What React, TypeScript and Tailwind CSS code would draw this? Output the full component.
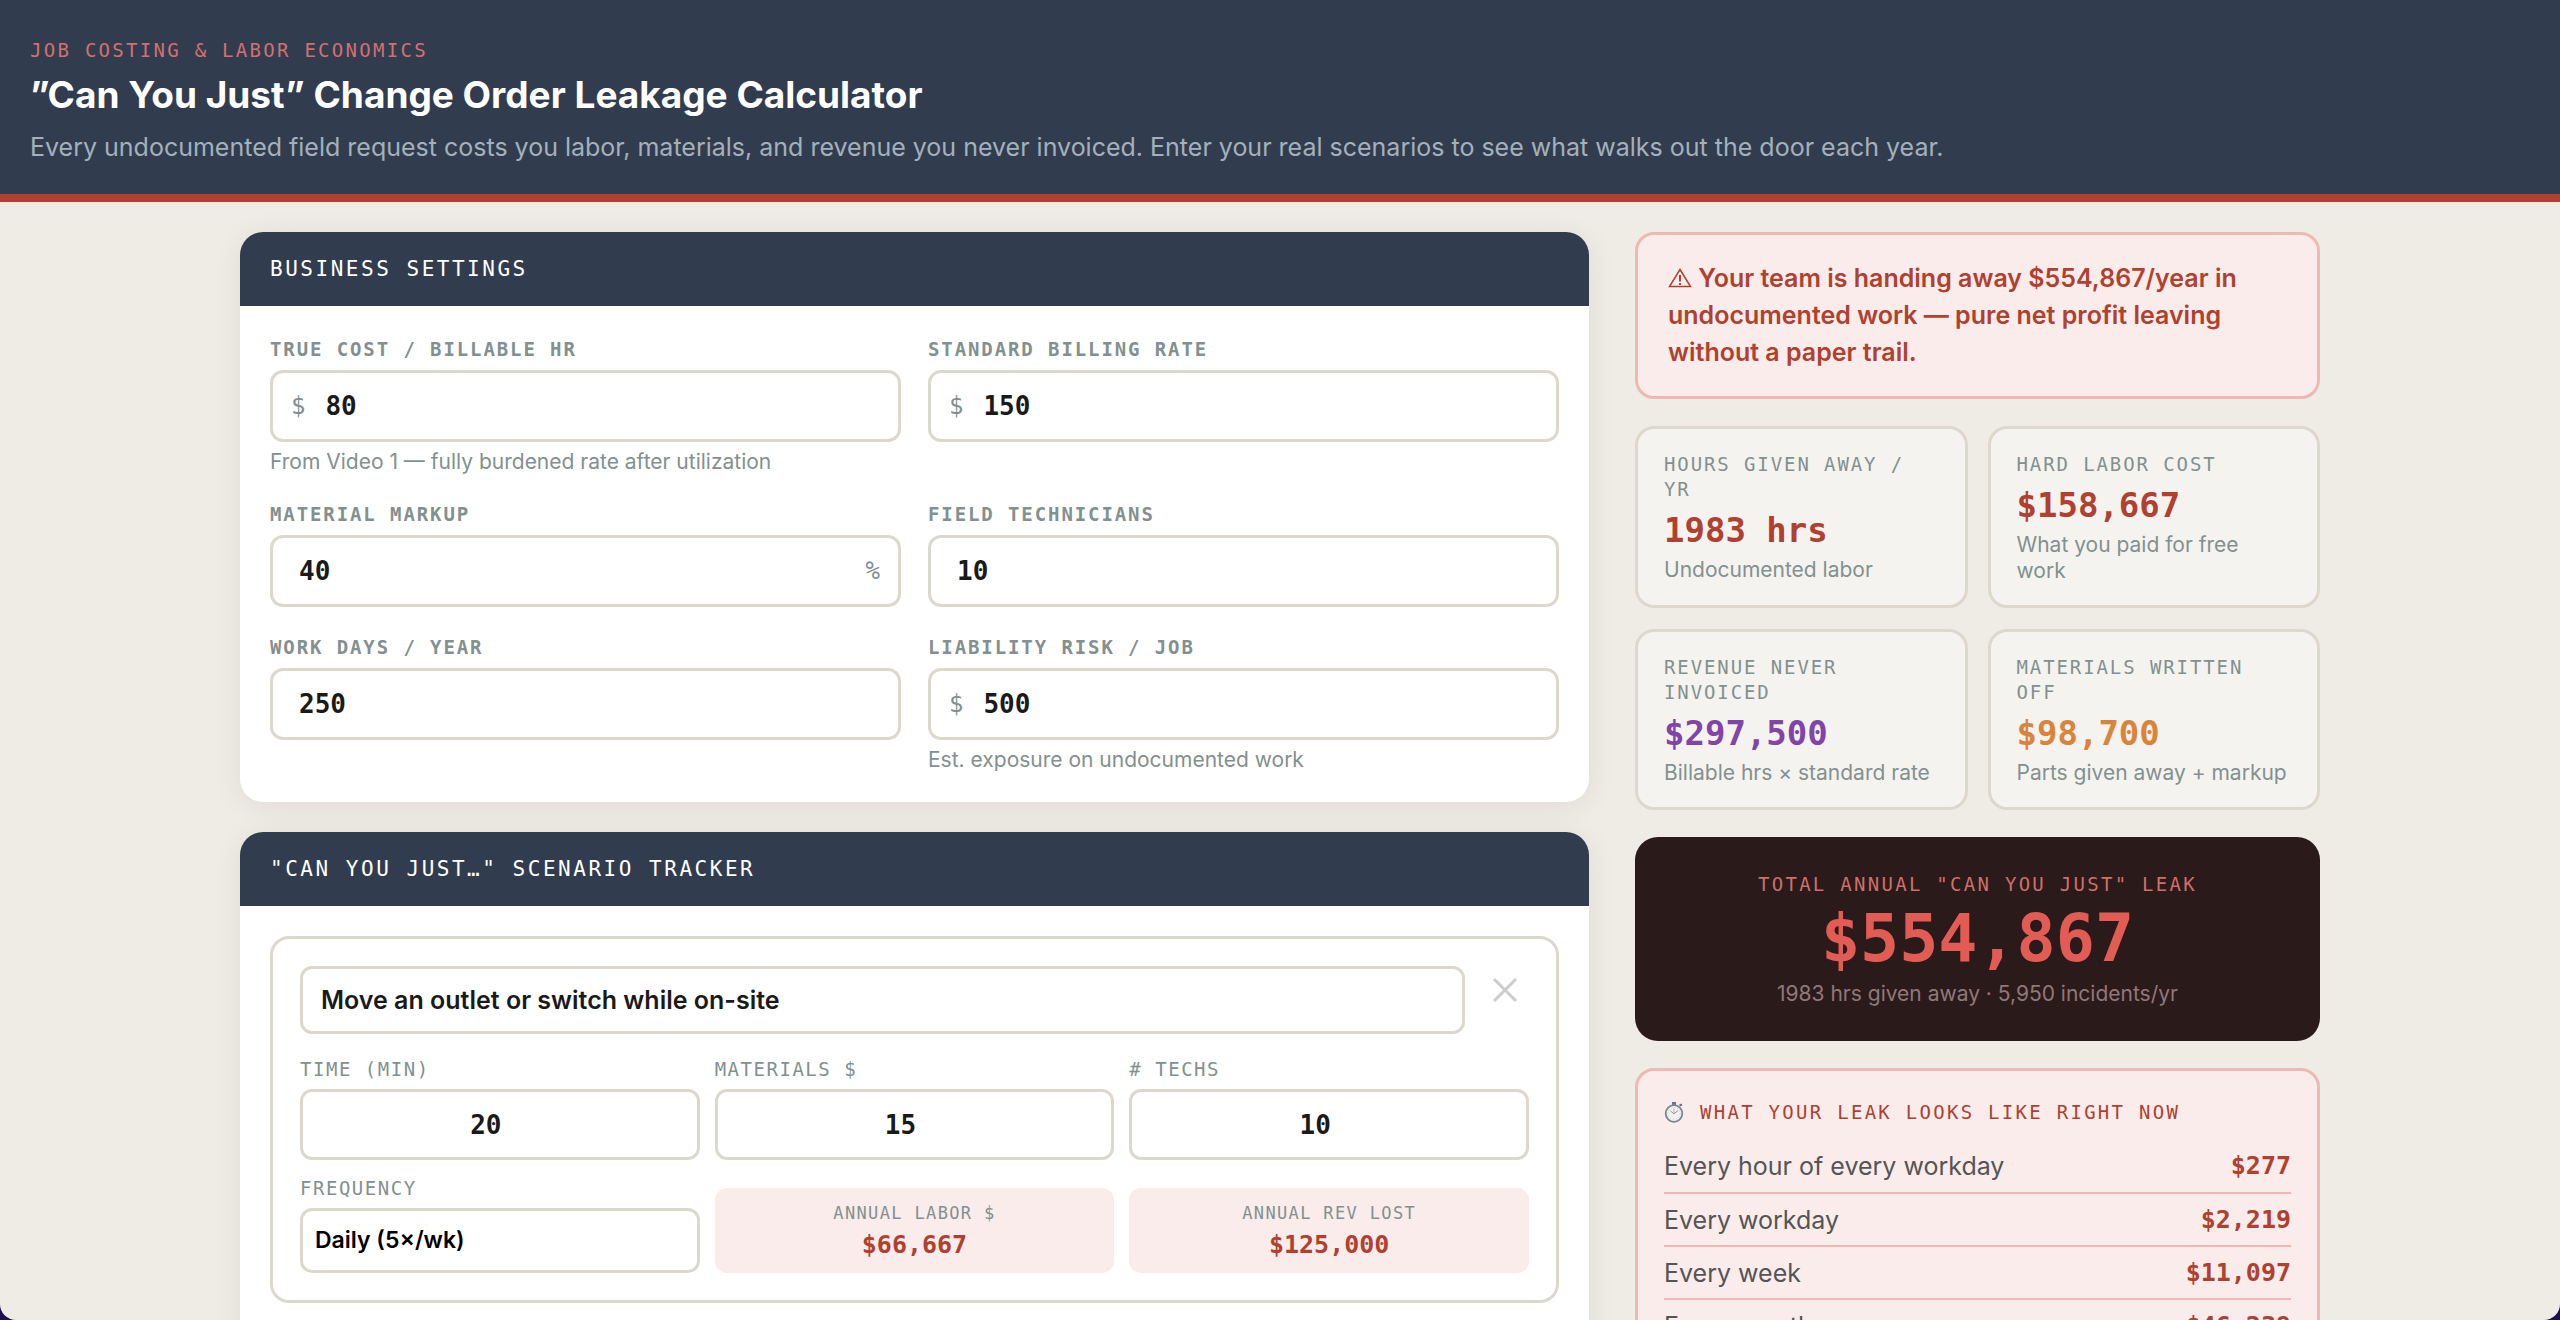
import { useState, type ReactNode } from "react";
import clsx from "clsx";

const mono = "font-['DejaVu_Sans_Mono',monospace]";

interface Setting {
  id: string;
  label: string;
  value: string;
  prefix?: string;
  suffix?: string;
  hint?: string;
}

const settings: Setting[] = [
  { id: "true-cost", label: "True Cost / Billable Hr", value: "80", prefix: "$", hint: "From Video 1 — fully burdened rate after utilization" },
  { id: "billing-rate", label: "Standard Billing Rate", value: "150", prefix: "$" },
  { id: "markup", label: "Material Markup", value: "40", suffix: "%" },
  { id: "technicians", label: "Field Technicians", value: "10" },
  { id: "work-days", label: "Work Days / Year", value: "250" },
  { id: "liability", label: "Liability Risk / Job", value: "500", prefix: "$", hint: "Est. exposure on undocumented work" },
];

const stats = [
  { label: "Hours Given Away / Yr", value: "1983 hrs", sub: "Undocumented labor", color: "text-[#b04030]" },
  { label: "Hard Labor Cost", value: "$158,667", sub: "What you paid for free work", color: "text-[#b04030]" },
  { label: "Revenue Never Invoiced", value: "$297,500", sub: "Billable hrs × standard rate", color: "text-[#8144a8]" },
  { label: "Materials Written Off", value: "$98,700", sub: "Parts given away + markup", color: "text-[#d9843a]" },
];

const leakRows = [
  ["Every hour of every workday", "$277"],
  ["Every workday", "$2,219"],
  ["Every week", "$11,097"],
  ["Every month", "$46,239"],
];

function WarningIcon() {
  return (
    <svg viewBox="0 0 24 20" className="inline-block h-5 w-6 align-[-1px]" fill="none" stroke="currentColor" aria-hidden="true">
      <path d="M12 1.5 22.5 18.5H1.5Z" strokeWidth="1.5" />
      <path d="M12 7v6.5" strokeWidth="2" />
      <path d="M12 15v2" strokeWidth="2" />
    </svg>
  );
}

function StopwatchIcon() {
  return (
    <svg viewBox="0 0 20 24" className="h-6 w-5" fill="none" aria-hidden="true">
      <path d="M8 2h4v3H8z" fill="#6b7480" />
      <path d="m15.5 5.5 2.5-1" stroke="#6b7480" strokeWidth="2" />
      <circle cx="10" cy="13.5" r="8.3" fill="#f0f1f0" stroke="#7b8590" strokeWidth="1.8" />
      <circle cx="10" cy="13.5" r="6" stroke="#c9cdd0" strokeWidth="1" strokeDasharray="1 2.1" />
      <path d="m6.5 11 3.5 2.8 4-3.3" stroke="#8d959c" strokeWidth="1" />
      <path d="M10 14V8.5" stroke="#d98a80" strokeWidth="0.7" />
    </svg>
  );
}

function Panel({ title, children }: { title: string; children: ReactNode }) {
  return (
    <section className="overflow-hidden rounded-[23px] bg-white shadow-[0_4px_30px_rgba(0,0,0,0.07)]">
      <h2 className={clsx(mono, "bg-[#313d4f] px-[30px] py-[22px] text-[21px] leading-[30px] tracking-[0.12em] text-white uppercase")}>
        {title}
      </h2>
      <div className="p-[30px]">{children}</div>
    </section>
  );
}

function SettingField({ setting }: { setting: Setting }) {
  const [value, setValue] = useState(setting.value);
  return (
    <div>
      <label
        htmlFor={setting.id}
        className={clsx(mono, "mb-2 block text-[19px] leading-[26px] font-bold tracking-[0.1em] text-[#839090] uppercase")}
      >
        {setting.label}
      </label>
      <div className="flex h-[72px] items-center rounded-[13px] border-3 border-[#ddd8ce] bg-white">
        {setting.prefix && <span className={clsx(mono, "pl-[18px] text-[24px] text-[#839090]")}>{setting.prefix}</span>}
        <input
          id={setting.id}
          inputMode="numeric"
          value={value}
          onChange={(e) => setValue(e.target.value)}
          className={clsx(
            mono,
            "h-full min-w-0 flex-1 bg-transparent text-[26px] font-bold text-[#1a1a1a] outline-none",
            setting.prefix ? "pl-5" : "pl-[26px]"
          )}
        />
        {setting.suffix && <span className={clsx(mono, "pr-[18px] text-[24px] text-[#839090]")}>{setting.suffix}</span>}
      </div>
      {setting.hint && <p className="mt-2 text-[21px] leading-6 text-[#839090]">{setting.hint}</p>}
    </div>
  );
}

function ScenarioField({ id, label, initial }: { id: string; label: string; initial: string }) {
  const [value, setValue] = useState(initial);
  return (
    <div>
      <ScenarioLabel htmlFor={id}>{label}</ScenarioLabel>
      <input
        id={id}
        inputMode="numeric"
        value={value}
        onChange={(e) => setValue(e.target.value)}
        className={clsx(
          mono,
          "h-[71px] w-full rounded-[12px] border-3 border-[#ddd8ce] bg-white pr-10 pl-3 text-center text-[26px] font-bold text-[#1a1a1a] outline-none"
        )}
      />
    </div>
  );
}

function ScenarioLabel({ htmlFor, children }: { htmlFor: string; children: ReactNode }) {
  return (
    <label htmlFor={htmlFor} className={clsx(mono, "mb-2 block text-[19px] leading-6 tracking-[0.08em] text-[#839090] uppercase")}>
      {children}
    </label>
  );
}

function ScenarioResult({ label, value }: { label: string; value: string }) {
  return (
    <div className="flex h-[85px] flex-col items-center justify-center self-end rounded-[12px] bg-[#faecea]">
      <div className={clsx(mono, "text-[17px] leading-6 tracking-[0.08em] text-[#839090] uppercase")}>{label}</div>
      <div className={clsx(mono, "mt-1 text-[25px] leading-8 font-bold text-[#b04030]")}>{value}</div>
    </div>
  );
}

function ScenarioCard() {
  const [name, setName] = useState("Move an outlet or switch while on-site");
  return (
    <div className="rounded-[19px] border-3 border-[#ddd8ce] p-[27px]">
      <div className="mb-[23px] flex items-start">
        <input
          aria-label="Scenario"
          value={name}
          onChange={(e) => setName(e.target.value)}
          className="h-[68px] min-w-0 flex-1 rounded-[12px] border-3 border-[#ddd8ce] bg-white px-[18px] text-[25px] font-semibold text-[#1a1a1a] outline-none"
        />
        <button type="button" aria-label="Remove scenario" className="ml-4 flex h-12 w-12 items-center justify-center text-[#cccccc]">
          <svg viewBox="0 0 26 26" className="h-[26px] w-[26px]" stroke="currentColor" strokeWidth="3" aria-hidden="true">
            <path d="m2 2 22 22M24 2 2 24" />
          </svg>
        </button>
      </div>
      <div className="grid grid-cols-3 gap-x-[15px] gap-y-4">
        <ScenarioField id="time" label="Time (min)" initial="20" />
        <ScenarioField id="materials" label="Materials $" initial="15" />
        <ScenarioField id="techs" label="# Techs" initial="10" />
        <div>
          <ScenarioLabel htmlFor="frequency">Frequency</ScenarioLabel>
          <select
            id="frequency"
            className="h-[65px] w-full appearance-none rounded-[12px] border-3 border-[#ddd8ce] bg-white px-3 text-[23px] font-semibold text-black outline-none"
          >
            <option>Daily (5×/wk)</option>
          </select>
        </div>
        <ScenarioResult label="Annual Labor $" value="$66,667" />
        <ScenarioResult label="Annual Rev Lost" value="$125,000" />
      </div>
    </div>
  );
}

function Results() {
  return (
    <aside className="flex flex-col gap-[27px]">
      <div className="rounded-[19px] border-3 border-[#edb9b1] bg-[#faecea] px-[30px] py-[25px] text-[25px] leading-[37px] font-semibold text-[#b04030]">
        <WarningIcon /> Your team is handing away $554,867/year in undocumented work — pure net profit leaving without a paper trail.
      </div>

      <div className="grid grid-cols-2 gap-x-5 gap-y-[21px]">
        {stats.map((stat) => (
          <div key={stat.label} className="rounded-[19px] border-3 border-[#ddd8ce] bg-[#f5f3ef] px-[26px] pt-[23px] pb-[21px]">
            <div className={clsx(mono, "text-[19px] leading-[25px] tracking-[0.1em] text-[#839090] uppercase")}>{stat.label}</div>
            <div className={clsx(mono, "mt-2 text-[34px] leading-10 font-bold", stat.color)}>{stat.value}</div>
            <div className="mt-[7px] text-[21px] leading-[26px] text-[#839090]">{stat.sub}</div>
          </div>
        ))}
      </div>

      <div className="rounded-[23px] bg-[#2a1a1a] p-[34px] text-center">
        <div className={clsx(mono, "text-[19px] leading-[26px] tracking-[0.12em] text-[#cd706a] uppercase")}>
          Total Annual "Can You Just" Leak
        </div>
        <div className={clsx(mono, "mt-[9px] text-[65px] leading-[65px] font-bold text-[#e05c55]")}>$554,867</div>
        <div className="mt-[10px] text-[21px] leading-[26px] text-[#917878]">1983 hrs given away · 5,950 incidents/yr</div>
      </div>

      <div className="rounded-[19px] border-3 border-[#edb9b1] bg-[#faecea] px-[26px] py-[27px]">
        <h2 className={clsx(mono, "flex items-center gap-4 text-[19px] leading-7 tracking-[0.12em] text-[#b04030] uppercase")}>
          <StopwatchIcon />
          What your leak looks like right now
        </h2>
        <table className="mt-[14px] w-full">
          <tbody>
            {leakRows.map(([label, value]) => (
              <tr key={label} className="h-[53px] border-b-2 border-[#edb9b1]">
                <th scope="row" className="text-left text-[25px] leading-8 font-normal text-[#555555]">
                  {label}
                </th>
                <td className={clsx(mono, "text-right text-[25px] leading-8 font-bold text-[#b04030]")}>{value}</td>
              </tr>
            ))}
          </tbody>
        </table>
      </div>
    </aside>
  );
}

export default function App() {
  return (
    <div className="h-screen overflow-hidden bg-[#1d1150] font-['Inter',sans-serif]">
      <div className="h-full overflow-hidden rounded-b-[16px] bg-[#efece5]">
        <header className="border-b-8 border-[#b04030] bg-[#313d4f] px-[30px] pt-[38px] pb-7">
          <p className={clsx(mono, "text-[19px] leading-6 tracking-[0.12em] text-[#d27070] uppercase")}>Job Costing & Labor Economics</p>
          <h1 className="mt-2 text-[37px] leading-[50px] font-bold text-white">”Can You Just” Change Order Leakage Calculator</h1>
          <p className="mt-2 text-[25px] leading-[38px] text-[#a4b0bb]">
            Every undocumented field request costs you labor, materials, and revenue you never invoiced. Enter your real scenarios to see
            what walks out the door each year.
          </p>
        </header>

        <main className="mx-auto grid max-w-[2080px] grid-cols-[1fr_685px] items-start gap-[46px] pt-[30px]">
          <div className="flex flex-col gap-[30px]">
            <Panel title="Business Settings">
              <div className="grid grid-cols-2 gap-x-[27px] gap-y-[27px]">
                {settings.map((s) => (
                  <SettingField key={s.id} setting={s} />
                ))}
              </div>
            </Panel>
            <Panel title={'"Can You Just…" Scenario Tracker'}>
              <div className="pb-10">
                <ScenarioCard />
              </div>
            </Panel>
          </div>
          <Results />
        </main>
      </div>
    </div>
  );
}
